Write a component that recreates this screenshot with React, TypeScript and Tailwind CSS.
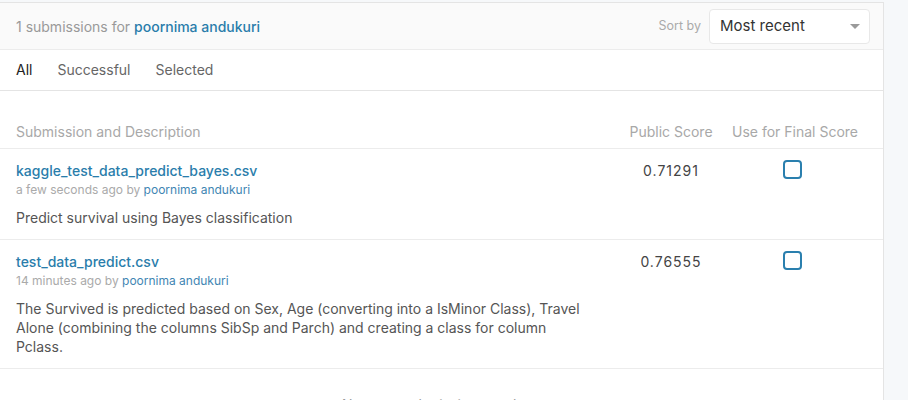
import React from "react";

const font = { fontFamily: "Inter, 'Noto Sans', sans-serif" };

type Submission = {
  file: string;
  when: string;
  author: string;
  description: string;
  score: string;
};

const submissions: Submission[] = [
  {
    file: "kaggle_test_data_predict_bayes.csv",
    when: "a few seconds ago",
    author: "poornima andukuri",
    description: "Predict survival using Bayes classification",
    score: "0.71291",
  },
  {
    file: "test_data_predict.csv",
    when: "14 minutes ago",
    author: "poornima andukuri",
    description:
      "The Survived is predicted based on Sex, Age (converting into a IsMinor Class), Travel Alone (combining the columns SibSp and Parch) and creating a class for column Pclass.",
    score: "0.76555",
  },
];

function SubmissionRow({ sub }: { sub: Submission }) {
  return (
    <div className="flex border-b border-[#ececec] pt-3 pb-3 pl-4 pr-[14px]">
      <div className="flex-1 pr-[16px]">
        <div className="text-[14px] leading-[20px] font-medium text-[#2a7dab]">
          {sub.file}
        </div>
        <div className="text-[12px] leading-[18px] text-[#aaaaaa]">
          {sub.when} by{" "}
          <span className="text-[#3f86b3]">{sub.author}</span>
        </div>
        <p className="mt-[9px] max-w-[570px] text-[14px] leading-[19px] text-[#555555]">
          {sub.description}
        </p>
      </div>
      <div className="w-[100px] text-center text-[14px] leading-[20px] tracking-[1px] text-[#444444]">
        {sub.score}
      </div>
      <div className="w-[148px] flex justify-center -mt-[1px] pr-[6px]">
        <div className="w-[19px] h-[19px] rounded-[4px] border-2 border-[#2a7fae] bg-white" />
      </div>
    </div>
  );
}

export default function App() {
  return (
    <div className="min-h-screen bg-[#f6f8fa] pt-[2px]" style={font}>
      <div className="w-[884px] bg-white border-t border-r border-[#e4e4e4]">
        {/* header */}
        <div className="h-[47px] bg-[#fafafa] border-b border-[#ececec] flex items-center justify-between pl-4 pr-[13px]">
          <div className="text-[14px] text-[#999999]">
            1 submissions for{" "}
            <span className="text-[#2a7dab] font-medium">poornima andukuri</span>
          </div>
          <div className="flex items-center gap-2">
            <span className="text-[12.5px] text-[#aaaaaa]">Sort by</span>
            <div className="w-[161px] h-[35px] bg-white border border-[#e8e8e8] rounded-[4px] flex items-center justify-between pl-[10px] pr-[9px]">
              <span className="text-[15px] text-[#333333]">Most recent</span>
              <span className="w-0 h-0 border-l-[5px] border-r-[5px] border-t-[5px] border-l-transparent border-r-transparent border-t-[#9a9a9a]" />
            </div>
          </div>
        </div>

        {/* tabs */}
        <div className="h-[41px] border-b border-[#e4e4e4] flex items-center pl-4 gap-[25px] text-[14px] pb-[1px]">
          <span className="text-[#222222]">All</span>
          <span className="text-[#666666]">Successful</span>
          <span className="text-[#666666]">Selected</span>
        </div>

        {/* table header */}
        <div className="flex border-b border-[#ececec] pt-[31px] pb-[6px] pl-4 pr-[14px] text-[14px] leading-[20px] text-[#a8a8a8]">
          <div className="flex-1">Submission and Description</div>
          <div className="w-[100px] text-center">Public Score</div>
          <div className="w-[148px] text-center">Use for Final Score</div>
        </div>

        {submissions.map((s) => (
          <SubmissionRow key={s.file} sub={s} />
        ))}

        <div className="pt-[25px] pb-6 text-center text-[14px] text-[#999999]">
          No more submissions to show
        </div>
      </div>
    </div>
  );
}
